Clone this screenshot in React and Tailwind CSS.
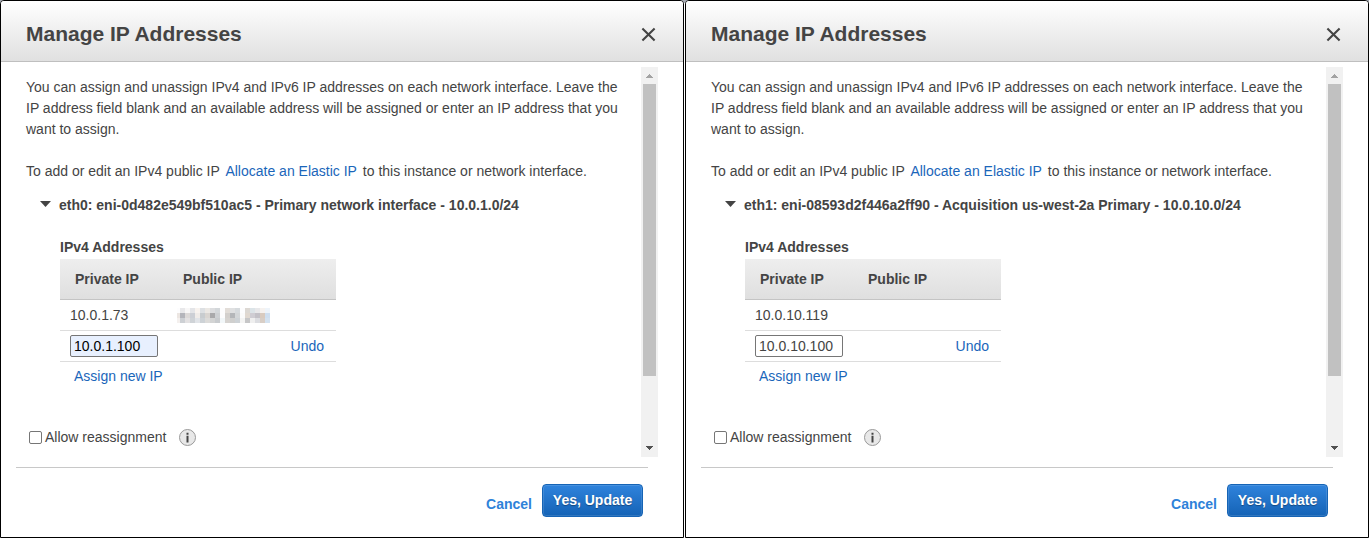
const CELLS = [
  ['#fdfdfe', '#e8e8ea', '#f8f7f7', '#e4e5e8', '#f8f3ef', '#dde0e3', '#ebe8e4', '#dcdddf', '#d3d7da', '#fdfdfe', '#e2ddd8', '#dfe0e1', '#d6dadd', '#fdfdfe', '#dcd8d3', '#dce4e8', '#e8e8ea', '#f6f2ef', '#eef4fa'],
  ['#ece6e2', '#b4b5bb', '#dcd9d8', '#cccfd5', '#f0ece9', '#c8cccf', '#d9d5d1', '#a9a9ab', '#cdd0d3', '#fdfdfe', '#d3d0cd', '#b4b6b9', '#d3d6d8', '#fbfbfb', '#e0d8d0', '#cfcdd3', '#c3c1c7', '#d9cbbf', '#cfdff0'],
  ['#f4f0ee', '#cdd0d4', '#e3e1e2', '#cfd3d7', '#e1e4e8', '#cdd2d6', '#dcdbd9', '#d3d4d4', '#c8cbce', '#f2f7f9', '#d6d3d0', '#cfcfce', '#cdd2d6', '#f4f4f3', '#c6c6c7', '#efefef', '#dcdde1', '#d8cec6', '#d4e2f0'],
];

function Obscured() {
  return (
    <svg width="93" height="15" viewBox="0 0 93 15" shapeRendering="crispEdges" aria-hidden="true">
      {CELLS.map((row, r) =>
        row.map((fill, c) => (
          <rect key={`${r}-${c}`} x={c === 0 ? 0 : c * 5 - 2} y={r * 5} width={c === 0 ? 3 : 5} height="5" fill={fill} />
        )),
      )}
    </svg>
  );
}

function ScrollBar() {
  return (
    <div className="flex h-[390px] w-[17px] flex-col items-center bg-[#f1f1f1]">
      <svg width="17" height="17" viewBox="0 0 17 17" shapeRendering="crispEdges" className="shrink-0">
        <path d="M8 7h1v1h1v1h1v1h1v1H5v-1h1V9h1V8h1z" fill="#a3a3a3" />
      </svg>
      <div className="h-[292px] w-[13px] bg-[#c1c1c1]" />
      <svg width="17" height="17" viewBox="0 0 17 17" shapeRendering="crispEdges" className="mt-auto shrink-0">
        <path d="M5 6h7v1h-1v1h-1v1H9v1H8V9H7V8H6V7H5z" fill="#505050" />
      </svg>
    </div>
  );
}

function Dialog({ eni, privateIp, newIp, filled, obscured, tableClass }) {
  return (
    <section className="flex h-[538px] w-[684px] flex-col overflow-hidden rounded-t-[4px] border border-black bg-white">
      <header className="flex h-[61px] shrink-0 items-center justify-between border-b border-[#bfbfbf] bg-linear-to-b from-white to-[#e0e0e0] pr-[27px] pl-[25px]">
        <h1 className="mt-[6px] text-[21px] leading-[24px] font-bold tracking-[-0.01px]">Manage IP Addresses</h1>
        <svg width="15" height="15" viewBox="0 0 15 15" className="mt-[7px]">
          <path d="M1.4 1.4l12.2 12.2M13.6 1.4L1.4 13.6" stroke="#444" strokeWidth="2.1" fill="none" />
        </svg>
      </header>
      <div className="mt-[5px] flex h-[390px] shrink-0">
        <div className="w-[640px] pt-[10px] pl-[25px]">
          <p className="whitespace-nowrap">
            You can assign and unassign IPv4 and IPv6 IP addresses on each network interface. Leave the<br />
            IP address field blank and an available address will be assigned or enter an IP address that you<br />
            want to assign.
          </p>
          <p className="mt-[21px] whitespace-nowrap">
            To add or edit an IPv4 public IP <a className="mx-[2px] text-[#1a66ba]">Allocate an Elastic IP</a> to this instance or network interface.
          </p>
          <h2 className="mt-[13px] flex h-[21px] items-center pl-[14px] font-bold whitespace-nowrap">
            <svg width="11" height="6" viewBox="0 0 11 6" className="mr-[8px] -mt-[3px]">
              <path d="M0 0h11L5.5 6z" fill="#444" />
            </svg>
            {eni}
          </h2>
          <div className="mt-[21px] pl-[34px]">
            <h3 className="h-[22px] font-bold">IPv4 Addresses</h3>
            <div className={tableClass}>
              <div className="flex h-[41px] items-center border-b border-[#c4c4c4] bg-linear-to-b from-[#eee] to-[#dfdfdf] pl-[15px] font-bold">
                <span className="w-[108px]">Private IP</span>
                <span>Public IP</span>
              </div>
              <div className="flex h-[31px] items-center border-b border-[#ddd] pl-[10px]">
                <span className="w-[107px]">{privateIp}</span>
                {obscured && <Obscured />}
              </div>
              <div className="flex h-[31px] items-center justify-between border-b border-[#ddd] pr-[12px] pl-[10px]">
                <input
                  defaultValue={newIp}
                  className={
                    filled
                      ? 'h-[22px] w-[88px] rounded-[2px] border border-[#767676] bg-[#e8f0fe] px-[3px] text-black'
                      : 'h-[22px] w-[88px] rounded-[2px] border border-[#767676] bg-white px-[3px]'
                  }
                />
                <a className="text-[#1a66ba]">Undo</a>
              </div>
            </div>
            <a className="mt-[4px] block pl-[14px] text-[#1a66ba]">Assign new IP</a>
          </div>
          <div className="mt-[40px] flex h-[21px] items-center pl-[3px]">
            <span className="h-[13px] w-[13px] rounded-[2px] border border-[#767676] bg-white" />
            <span className="ml-[3px]">Allow reassignment</span>
            <svg width="17" height="17" viewBox="0 0 17 17" className="ml-[13px]">
              <circle cx="8.5" cy="8.5" r="8" fill="#e8e8e8" stroke="#999" />
              <path d="M7.5 3.7h2v2h-2zM7.5 6.7h2v6.9h-2z" fill="#444" />
            </svg>
          </div>
        </div>
        <ScrollBar />
      </div>
      <footer className="mt-[10px] mr-[35px] ml-[15px] flex items-start justify-end border-t border-[#c8c8c8] pt-[16px] pr-[5px] font-bold">
        <a className="mt-[10px] mr-[10px] text-[#2e82d9]">Cancel</a>
        <button className="flex h-[33px] w-[101px] items-center justify-center rounded-[4px] border border-[#1664b5] bg-linear-to-b from-[#2f83dc] to-[#1463b6] font-bold text-white shadow-[inset_0_0_0_1px_rgba(255,255,255,0.12)] [text-shadow:0_1px_1px_rgba(0,0,0,0.35)]">
          Yes, Update
        </button>
      </footer>
    </section>
  );
}

export default function App() {
  return (
    <main className="flex h-[539px] w-[1369px] gap-px overflow-hidden bg-[linear-gradient(#a8acb4_3px,#fff_3px)] font-['Liberation_Sans',Arial,sans-serif] text-[14px] leading-[21px] text-[#444]">
      <Dialog
        eni="eth0: eni-0d482e549bf510ac5 - Primary network interface - 10.0.1.0/24"
        privateIp="10.0.1.73"
        newIp="10.0.1.100"
        filled
        obscured
        tableClass="w-[276px]"
      />
      <Dialog
        eni="eth1: eni-08593d2f446a2ff90 - Acquisition us-west-2a Primary - 10.0.10.0/24"
        privateIp="10.0.10.119"
        newIp="10.0.10.100"
        tableClass="w-[256px]"
      />
    </main>
  );
}
